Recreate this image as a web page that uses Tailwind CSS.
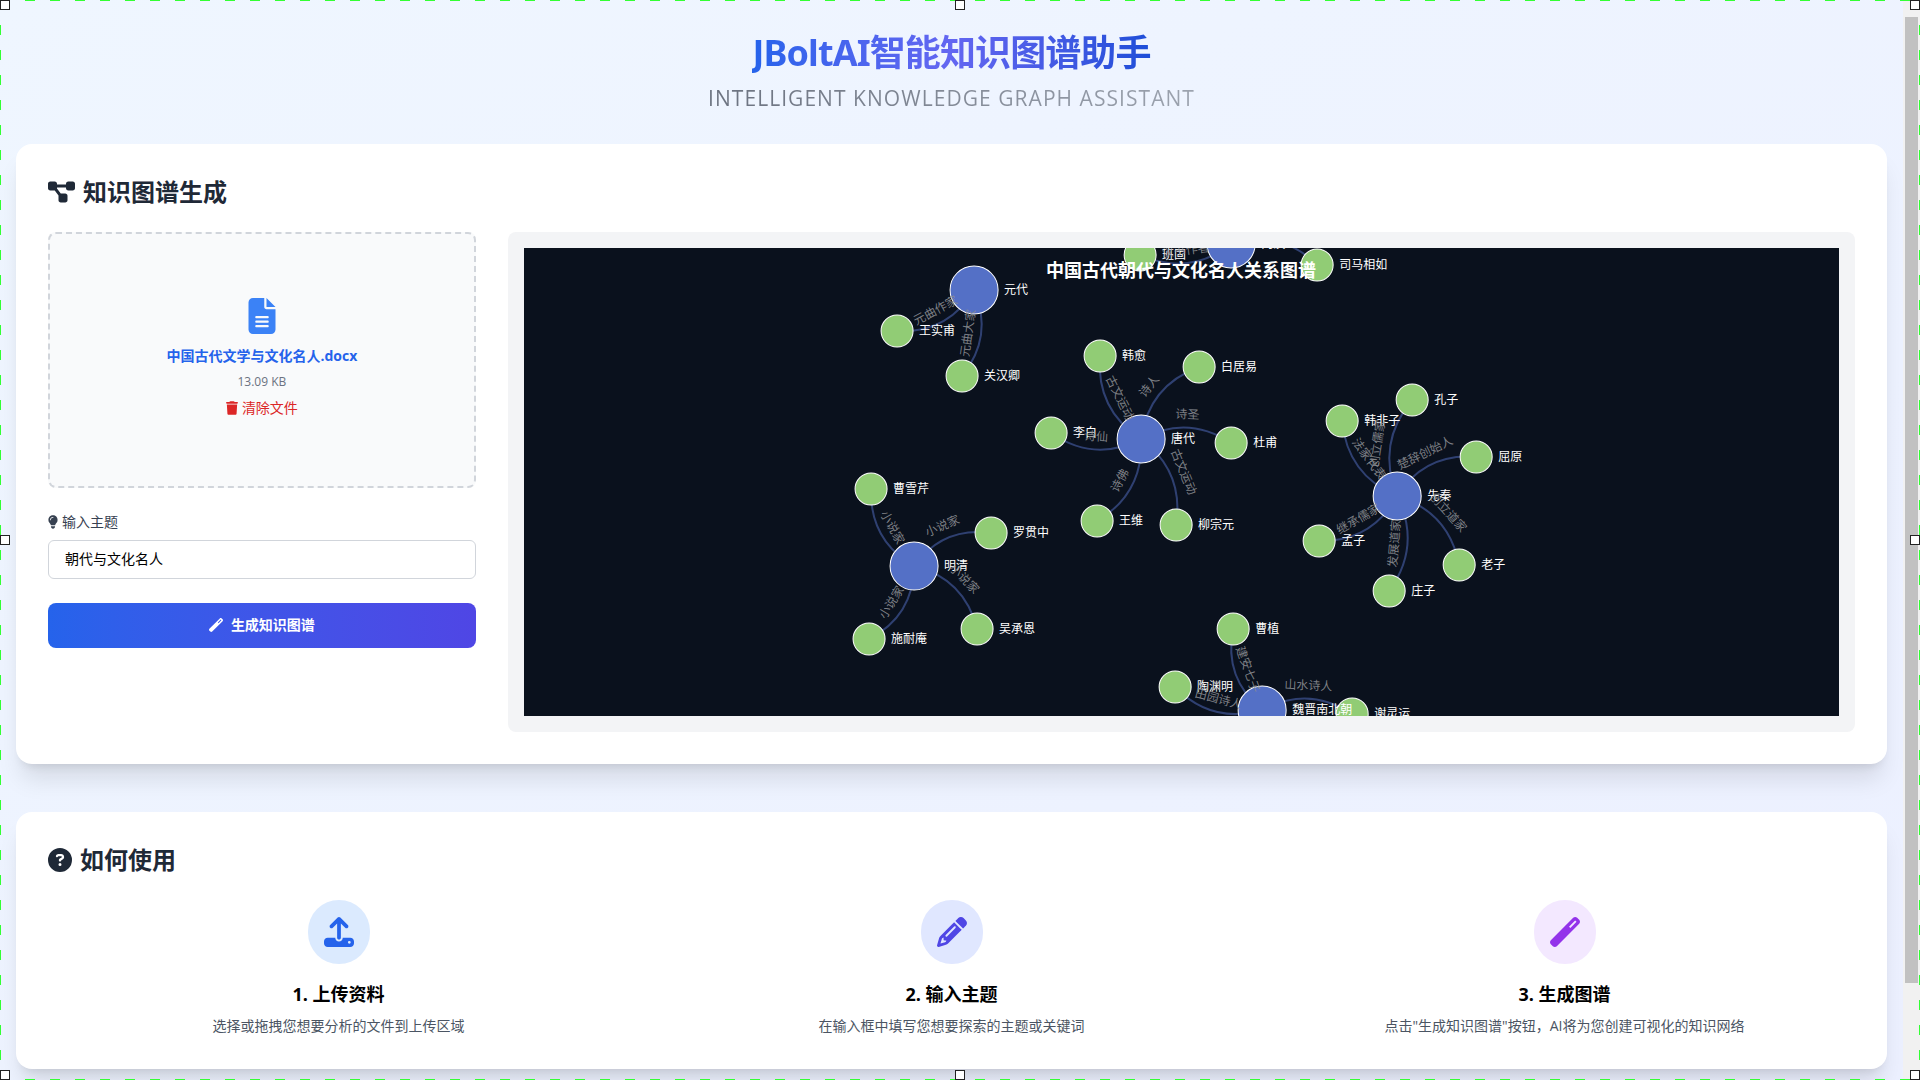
<!DOCTYPE html>
<html lang="zh-CN">
<head>
<meta charset="utf-8">
<meta name="viewport" content="width=device-width, initial-scale=1">
<title>JBoltAI智能知识图谱助手</title>
<script src="https://cdn.jsdelivr.net/npm/@tailwindcss/browser@4"></script>
</head>
<body class="relative flex min-h-screen bg-linear-to-br from-[#eff6ff] to-[#ecf0ff] font-['Open_Sans','Noto_Sans_CJK_SC',sans-serif] text-black">

<main class="min-w-0 flex-1 overflow-hidden px-4 pt-8 pb-[11px]">
  <header class="mb-8 flex flex-col items-center gap-[11px]">
    <h1 class="bg-linear-to-r from-[#2563eb] via-[#6366f1] to-[#1d4ed8] bg-clip-text pt-px font-['Noto_Sans','Noto_Sans_CJK_SC',sans-serif] text-4xl leading-10 font-bold tracking-tight text-transparent">JBoltAI智能知识图谱助手</h1>
    <p class="bg-linear-to-r from-[#6b7280] to-[#9ca3af] bg-clip-text text-[21px] leading-7 tracking-wider text-transparent">INTELLIGENT KNOWLEDGE GRAPH ASSISTANT</p>
  </header>

  <section class="mb-12 rounded-2xl bg-white p-8 shadow-xl">
    <h2 class="mb-6 flex items-center gap-2 text-2xl leading-8 font-bold text-[#1f2937]">
      <svg class="h-6 w-[27px]" viewBox="0 0 576 512" fill="currentColor" aria-hidden="true"><path d="M0 80C0 53.5 21.5 32 48 32h96c26.5 0 48 21.5 48 48V96H384V80c0-26.5 21.5-48 48-48h96c26.5 0 48 21.5 48 48v96c0 26.5-21.5 48-48 48H432c-26.5 0-48-21.5-48-48V160H192v16c0 1.700-.1 3.400-.3 5L272 288h96c26.500 0 48 21.500 48 48v96c0 26.500-21.500 48-48 48H272c-26.500 0-48-21.500-48-48V336c0-1.700 .1-3.400 .3-5L144 224H48c-26.500 0-48-21.500-48-48V80z"/></svg>
      知识图谱生成
    </h2>
    <div class="grid grid-cols-4 gap-8">
      <div>
        <div class="mb-6 flex h-64 flex-col items-center justify-center rounded-lg border-2 border-dashed border-[#d1d5db] bg-[#f9fafb]">
          <svg class="h-9 w-7 text-[#3b82f6]" viewBox="0 0 384 512" fill="currentColor" aria-hidden="true"><path d="M64 0C28.700 0 0 28.700 0 64V448c0 35.300 28.700 64 64 64H320c35.300 0 64-28.700 64-64V160H256c-17.700 0-32-14.300-32-32V0H64zM256 0V128H384L256 0zM112 256H272c8.800 0 16 7.200 16 16s-7.200 16-16 16H112c-8.800 0-16-7.200-16-16s7.200-16 16-16zm0 64H272c8.800 0 16 7.200 16 16s-7.200 16-16 16H112c-8.800 0-16-7.200-16-16s7.200-16 16-16zm0 64H272c8.800 0 16 7.200 16 16s-7.200 16-16 16H112c-8.800 0-16-7.200-16-16s7.200-16 16-16z"/></svg>
          <p class="mt-3 text-sm leading-5 font-bold text-[#2563eb]">中国古代文学与文化名人.docx</p>
          <p class="mt-2 text-xs leading-4 text-[#6b7280]">13.09 KB</p>
          <button type="button" class="mt-2 mb-1 flex items-center gap-1 text-sm leading-5 text-[#dc2626]">
            <svg class="h-3.5 w-3" viewBox="0 0 448 512" fill="currentColor" aria-hidden="true"><path d="M135.200 17.700L128 32H32C14.300 32 0 46.300 0 64S14.300 96 32 96H416c17.700 0 32-14.300 32-32s-14.300-32-32-32H320l-7.200-14.300C307.400 6.800 296.300 0 284.200 0H163.800c-12.100 0-23.200 6.800-28.600 17.700zM416 128H32L53.200 467c1.600 25.300 22.600 45 47.900 45H346.900c25.300 0 46.300-19.700 47.900-45L416 128z"/></svg>
            清除文件
          </button>
        </div>
        <label for="topic" class="mb-2 flex items-center gap-1 text-sm leading-5 text-[#374151]">
          <svg class="h-3.5 w-2.5" viewBox="0 0 384 512" fill="currentColor" aria-hidden="true"><path d="M272 384c9.600-31.900 29.500-59.100 49.200-86.200l0 0c5.200-7.100 10.400-14.200 15.400-21.400c19.800-28.500 31.400-63 31.400-100.300C368 78.800 289.200 0 192 0S16 78.800 16 176c0 37.300 11.600 71.900 31.400 100.300c5 7.200 10.200 14.300 15.400 21.400l0 0c19.800 27.100 39.700 54.400 49.200 86.200H272zM192 512c44.200 0 80-35.800 80-80V416H112v16c0 44.200 35.800 80 80 80zM112 176c0 8.800-7.200 16-16 16s-16-7.200-16-16c0-61.900 50.100-112 112-112c8.800 0 16 7.200 16 16s-7.200 16-16 16c-44.200 0-80 35.800-80 80z"/></svg>
          输入主题
        </label>
        <input id="topic" type="text" value="朝代与文化名人" class="mb-6 block h-[39px] w-full rounded-md border border-[#d1d5db] bg-white px-4 pb-1 text-sm">
        <button type="button" class="flex h-[45px] w-full items-center justify-center gap-2 rounded-lg bg-linear-to-r from-[#2563eb] to-[#4f46e5] pb-0.5 text-sm font-bold text-white">
          <svg class="size-3.5" viewBox="0 0 512 512" fill="currentColor" aria-hidden="true"><path d="M14.100 463.300c-18.700-18.700-18.700-49.100 0-67.900L395.400 14.100c18.700-18.700 49.100-18.700 67.900 0l34.600 34.600c18.700 18.700 18.700 49.100 0 67.900L116.500 497.900c-18.700 18.700-49.100 18.700-67.900 0L14.100 463.300zM347.600 187.600l105-105L429.400 59.300l-105 105 23.300 23.300z"/></svg>
          生成知识图谱
        </button>
      </div>
      <div class="col-span-3 h-[500px] rounded-lg bg-[#f3f4f6] p-4">
        <svg id="graph" class="size-full overflow-hidden bg-[#0a111d]" viewBox="524 248 1315 468" preserveAspectRatio="xMidYMid slice" role="img" aria-label="中国古代朝代与文化名人关系图谱"></svg>
      </div>
    </div>
  </section>

  <section class="rounded-2xl bg-white p-8 shadow-xl">
    <h2 class="mb-6 flex items-center gap-2 text-2xl leading-8 font-bold text-[#1f2937]">
      <svg class="size-6" viewBox="0 0 512 512" fill="currentColor" aria-hidden="true"><path d="M256 512A256 256 0 1 0 256 0a256 256 0 1 0 0 512zM169.800 165.300c7.900-22.300 29.100-37.300 52.800-37.300h58.300c34.900 0 63.100 28.300 63.100 63.100c0 22.600-12.100 43.500-31.700 54.800L280 264.400c-.2 13-10.900 23.600-24 23.600c-13.300 0-24-10.700-24-24V250.500c0-8.600 4.600-16.500 12.100-20.800l44.300-25.400c4.700-2.700 7.600-7.700 7.600-13.100c0-8.400-6.800-15.100-15.100-15.100H222.600c-3.400 0-6.400 2.100-7.500 5.300l-.4 1.200c-4.400 12.500-18.200 19-30.600 14.600s-19-18.200-14.600-30.600l.4-1.200zM224 352a32 32 0 1 1 64 0 32 32 0 1 1-64 0z"/></svg>
      如何使用
    </h2>
    <div class="grid grid-cols-3 gap-8 pb-px">
      <div class="flex flex-col items-center text-center">
        <div class="mb-4 flex h-16 w-[62px] items-center justify-center rounded-full bg-[#dbeafe] text-[#2563eb]">
          <svg class="size-[30px]" viewBox="0 0 512 512" fill="currentColor" aria-hidden="true"><path d="M288 109.300V352c0 17.700-14.300 32-32 32s-32-14.300-32-32V109.300l-73.400 73.400c-12.500 12.500-32.800 12.500-45.300 0s-12.500-32.800 0-45.300l128-128c12.500-12.500 32.800-12.500 45.300 0l128 128c12.500 12.500 12.500 32.800 0 45.300s-32.800 12.500-45.300 0L288 109.300zM64 352H192c0 35.300 28.700 64 64 64s64-28.700 64-64H448c35.300 0 64 28.700 64 64v32c0 35.300-28.700 64-64 64H64c-35.300 0-64-28.700-64-64V416c0-35.300 28.700-64 64-64zM432 456a24 24 0 1 0 0-48 24 24 0 1 0 0 48z"/></svg>
        </div>
        <h3 class="mb-2 text-lg leading-7 font-bold">1. 上传资料</h3>
        <p class="text-sm leading-5 text-[#4b5563]">选择或拖拽您想要分析的文件到上传区域</p>
      </div>
      <div class="flex flex-col items-center text-center">
        <div class="mb-4 flex h-16 w-[62px] items-center justify-center rounded-full bg-[#e0e7ff] text-[#4f46e5]">
          <svg class="size-[30px]" viewBox="0 0 512 512" fill="currentColor" aria-hidden="true"><path d="M410.300 231l11.300-11.300-33.900-33.900-62.100-62.100L291.700 89.800l-11.300 11.300-22.600 22.600L58.600 322.900c-10.400 10.400-18 23.300-22.200 37.400L1 480.700c-2.500 8.400-.2 17.500 6.100 23.700s15.300 8.500 23.700 6.100l120.300-35.400c14.100-4.200 27-11.800 37.400-22.200L387.700 253.700 410.300 231zM160 399.400l-9.100 22.700c-4 3.100-8.500 5.400-13.300 6.900L59.400 452l23-78.100c1.400-4.900 3.800-9.400 6.900-13.300l22.700-9.100v32c0 8.800 7.200 16 16 16h32zM362.700 18.700L348.300 33.200 325.700 55.800 314.300 67.100l33.900 33.900 62.100 62.100 33.900 33.900 11.300-11.300 22.600-22.600 14.500-14.500c25-25 25-65.500 0-90.500L453.300 18.700c-25-25-65.500-25-90.500 0zm-47.400 168l-144 144c-6.200 6.200-16.400 6.200-22.600 0s-6.200-16.400 0-22.600l144-144c6.200-6.200 16.400-6.200 22.600 0s6.200 16.400 0 22.600z"/></svg>
        </div>
        <h3 class="mb-2 text-lg leading-7 font-bold">2. 输入主题</h3>
        <p class="text-sm leading-5 text-[#4b5563]">在输入框中填写您想要探索的主题或关键词</p>
      </div>
      <div class="flex flex-col items-center text-center">
        <div class="mb-4 flex h-16 w-[62px] items-center justify-center rounded-full bg-[#f3e8ff] text-[#9333ea]">
          <svg class="size-[30px]" viewBox="0 0 512 512" fill="currentColor" aria-hidden="true"><path d="M14.100 463.300c-18.700-18.700-18.700-49.100 0-67.900L395.400 14.100c18.700-18.700 49.100-18.700 67.900 0l34.600 34.600c18.700 18.700 18.700 49.100 0 67.900L116.500 497.900c-18.700 18.700-49.100 18.700-67.900 0L14.100 463.300zM347.600 187.600l105-105L429.400 59.300l-105 105 23.300 23.300z"/></svg>
        </div>
        <h3 class="mb-2 text-lg leading-7 font-bold">3. 生成图谱</h3>
        <p class="text-sm leading-5 text-[#4b5563]">点击"生成知识图谱"按钮，AI将为您创建可视化的知识网络</p>
      </div>
    </div>
  </section>
</main>

<!-- scroll track -->
<div class="flex w-[17px] flex-col bg-[#f1f1f1] px-0.5 pt-[17px] pb-[97px]" aria-hidden="true">
  <div class="flex-1 bg-[#c1c1c1]"></div>
</div>

<!-- selection frame with its eight handles -->
<div class="pointer-events-none absolute inset-0" aria-hidden="true">
  <div class="absolute inset-x-0 top-0 h-px bg-[repeating-linear-gradient(to_right,#33ff33_0_10px,transparent_10px_25px)]"></div>
  <div class="absolute inset-x-0 bottom-0 h-px bg-[repeating-linear-gradient(to_right,#33ff33_0_10px,transparent_10px_25px)]"></div>
  <div class="absolute inset-y-0 left-0 w-px bg-[repeating-linear-gradient(to_bottom,#33ff33_0_10px,transparent_10px_25px)]"></div>
  <div class="absolute inset-y-0 right-0 w-px bg-[repeating-linear-gradient(to_bottom,#33ff33_0_10px,transparent_10px_25px)]"></div>
  <div class="absolute inset-0 flex flex-col justify-between">
    <div class="flex justify-between"><i class="size-2.5 border border-[#222] bg-white"></i><i class="size-2.5 border border-[#222] bg-white"></i><i class="size-2.5 border border-[#222] bg-white"></i></div>
    <div class="flex justify-between"><i class="size-2.5 border border-[#222] bg-white"></i><i class="size-2.5 border border-[#222] bg-white"></i></div>
    <div class="flex justify-between"><i class="size-2.5 border border-[#222] bg-white"></i><i class="size-2.5 border border-[#222] bg-white"></i><i class="size-2.5 border border-[#222] bg-white"></i></div>
  </div>
</div>

<script>
// Each group: dynasty [name, x, y] and its people [name, x, y, relation]
const groups = [
  { hub: ['两汉', 1231, 244], people: [['班固', 1140, 255, '汉书作者'], ['司马相如', 1317, 265, '']] },
  { hub: ['元代', 974, 290], people: [['王实甫', 897, 331, '元曲作家'], ['关汉卿', 962, 376, '元曲大家']] },
  { hub: ['唐代', 1141, 439], people: [['韩愈', 1100, 356, '古文运动'], ['白居易', 1199, 367, '诗人'], ['李白', 1051, 433, '诗仙'], ['杜甫', 1231, 443, '诗圣'], ['王维', 1097, 521, '诗佛'], ['柳宗元', 1176, 525, '古文运动']] },
  { hub: ['明清', 914, 566], people: [['曹雪芹', 871, 489, '小说家'], ['罗贯中', 991, 533, '小说家'], ['施耐庵', 869, 639, '小说家'], ['吴承恩', 977, 629, '小说家']] },
  { hub: ['先秦', 1397, 496], people: [['韩非子', 1342, 421, '法家代表'], ['孔子', 1412, 400, '创立儒家'], ['屈原', 1476, 457, '楚辞创始人'], ['孟子', 1319, 541, '继承儒家'], ['庄子', 1389, 591, '发展道家'], ['老子', 1459, 565, '创立道家']] },
  { hub: ['魏晋南北朝', 1262, 710], people: [['谢灵运', 1352, 714, '山水诗人'], ['曹植', 1233, 629, '建安七子'], ['陶渊明', 1175, 687, '田园诗人']] }
];
const CURVE = 0.3;
let edges = '', nodes = '', names = '', relations = '';
const addNode = (name, x, y, r, fill) => {
  nodes += `<circle cx="${x}" cy="${y}" r="${r}" fill="${fill}" stroke="#fff" stroke-width="1"/>`;
  names += `<text x="${x + r + 6}" y="${y + 4}">${name}</text>`;
};
for (const { hub: [hubName, hx, hy], people } of groups) {
  for (const [name, x, y, relation] of people) {
    const mx = (hx + x) / 2, my = (hy + y) / 2;
    const cx = mx - (hy - y) * CURVE, cy = my - (x - hx) * CURVE;
    edges += `<path d="M${hx} ${hy}Q${cx} ${cy} ${x} ${y}"/>`;
    let angle = Math.atan2(y - hy, x - hx) * 180 / Math.PI;
    if (angle > 90) angle -= 180;
    if (angle < -90) angle += 180;
    if (relation) relations += `<text transform="translate(${(mx + cx) / 2} ${(my + cy) / 2}) rotate(${angle})" y="-9">${relation}</text>`;
    addNode(name, x, y, 16, '#91cc75');
  }
  addNode(hubName, hx, hy, 24, '#5470c6');
}
document.getElementById('graph').innerHTML = `
  <g fill="none" stroke="#5470c6" stroke-opacity="0.5" stroke-width="2">${edges}</g>
  <g>${nodes}</g>
  <g fill="#fff" font-size="12">${names}</g>
  <g fill="#8a8d92" fill-opacity="0.9" font-size="12" text-anchor="middle">${relations}</g>
  <text x="1181" y="277" fill="#fff" font-size="18" font-weight="700" text-anchor="middle">中国古代朝代与文化名人关系图谱</text>`;
</script>
</body>
</html>
